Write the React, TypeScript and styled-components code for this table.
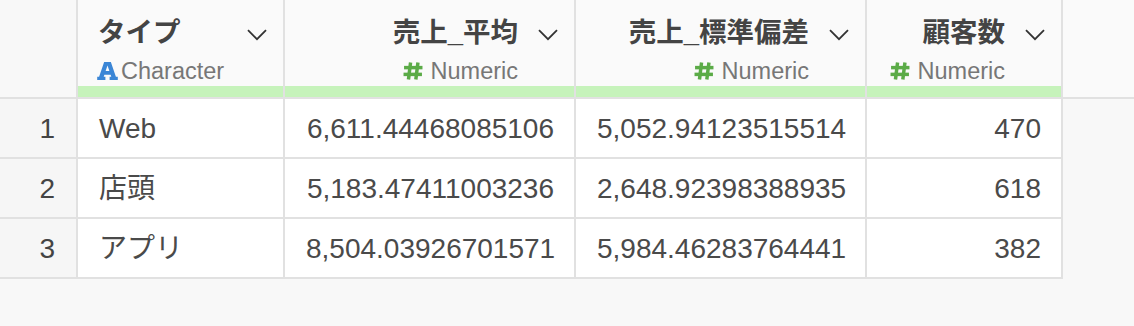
import React from "react";
import styled, { createGlobalStyle } from "styled-components";

const Global = createGlobalStyle`
  html, body { margin: 0; padding: 0; background: #f8f8f8; }
  body { font-family: "Liberation Sans", "Noto Sans CJK JP", sans-serif; color: #444; }
  * { box-sizing: border-box; }
`;

const BORDER = "#e1e1e1";

const Page = styled.div`
  width: 1134px;
  height: 326px;
  background: #f8f8f8;
  overflow: hidden;
`;

const HeaderBar = styled.div`
  display: flex;
  width: 100%;
  background: #fafafa;
  border-bottom: 2px solid ${BORDER};
`;

const CornerCell = styled.div`
  width: 78px;
  height: 97px;
  border-right: 2px solid ${BORDER};
  background: #f8f8f8;
`;

const HeadCell = styled.div<{ $w: number }>`
  width: ${(p) => p.$w}px;
  height: 97px;
  border-right: 2px solid ${BORDER};
  display: flex;
  flex-direction: column;
`;

const HeadBody = styled.div<{ $align: "left" | "right" }>`
  flex: 1;
  display: grid;
  grid-template-columns: 1fr 20px;
  grid-template-rows: 34px 28px;
  column-gap: 20px;
  row-gap: 7px;
  padding: 16px 16px 0 20px;
  text-align: ${(p) => p.$align};
`;

const Title = styled.div`
  font-size: 27.5px;
  line-height: 34px;
  font-weight: bold;
  color: #444;
  white-space: nowrap;
`;

const Chevron = styled.svg`
  width: 20px;
  height: 12px;
  margin-top: 13px;
`;

const Sub = styled.div<{ $align: "left" | "right" }>`
  display: flex;
  align-items: center;
  justify-content: ${(p) => (p.$align === "left" ? "flex-start" : "flex-end")};
  font-size: 23.5px;
  line-height: 28px;
  color: #777;
  white-space: nowrap;
`;

const TypeIcon = styled.svg<{ $gap: number; $w: number }>`
  width: ${(p) => p.$w}px;
  min-width: ${(p) => p.$w}px;
  height: 18px;
  margin-right: ${(p) => p.$gap}px;
  margin-left: -1px;
  flex: none;
  display: block;
`;

const GreenBar = styled.div`
  height: 11px;
  background: #c6f3bb;
`;

const Row = styled.div`
  display: flex;
  width: max-content;
  border-bottom: 2px solid ${BORDER};
`;

const NumCell = styled.div`
  width: 78px;
  height: 58px;
  border-right: 2px solid ${BORDER};
  background: #f6f6f6;
  font-size: 28px;
  line-height: 60px;
  text-align: right;
  padding-right: 21px;
  color: #444;
`;

const Cell = styled.div<{ $w: number; $align: "left" | "right" }>`
  width: ${(p) => p.$w}px;
  height: 58px;
  border-right: 2px solid ${BORDER};
  background: #fff;
  font-size: 28px;
  line-height: 60px;
  text-align: ${(p) => p.$align};
  padding: 0 20px 0 21px;
  color: #4a4a4a;
  white-space: nowrap;
`;

type Col = { title: string; kind: "char" | "num"; w: number };

const cols: Col[] = [
  { title: "タイプ", kind: "char", w: 207 },
  { title: "売上_平均", kind: "num", w: 291 },
  { title: "売上_標準偏差", kind: "num", w: 291 },
  { title: "顧客数", kind: "num", w: 196 },
];

const rows: string[][] = [
  ["Web", "6,611.44468085106", "5,052.94123515514", "470"],
  ["店頭", "5,183.47411003236", "2,648.92398388935", "618"],
  ["アプリ", "8,504.03926701571", "5,984.46283764441", "382"],
];

const CharIcon = () => (
  <TypeIcon $gap={3} $w={21} viewBox="0 0 20 17" preserveAspectRatio="none">
    <path
      fillRule="evenodd"
      fill="#3b86d6"
      d="M6.8 0 H13.2 L18 14 H19.8 V17 H12 V14 H13.6 L13 12 H7 L6.4 14 H8 V17 H0.2 V14 H2 Z M8.2 8.6 H11.8 L10 3.2 Z"
    />
  </TypeIcon>
);

const NumIcon = () => (
  <TypeIcon $gap={8} $w={20} viewBox="0 0 19 17" preserveAspectRatio="none">
    <g stroke="#5bab47" strokeWidth="3.3" fill="none">
      <path d="M7.2 0.5 L5.2 16.5" />
      <path d="M14.2 0.5 L12.2 16.5" />
      <path d="M1 5.3 H18.5" />
      <path d="M0.5 11.7 H18" />
    </g>
  </TypeIcon>
);

const Header = ({ col }: { col: Col }) => {
  const align = col.kind === "char" ? "left" : "right";
  return (
    <HeadCell $w={col.w}>
      <HeadBody $align={align}>
        <Title>{col.title}</Title>
        <Chevron viewBox="0 0 20 12">
          <path d="M1 1.2 L10 10.2 L19 1.2" stroke="#333" strokeWidth="1.8" fill="none" />
        </Chevron>
        <Sub $align={align}>
          {col.kind === "char" ? <CharIcon /> : <NumIcon />}
          {col.kind === "char" ? "Character" : "Numeric"}
        </Sub>
      </HeadBody>
      <GreenBar />
    </HeadCell>
  );
};

export default function App() {
  return (
    <Page>
      <Global />
      <HeaderBar>
        <CornerCell />
        {cols.map((c) => (
          <Header key={c.title} col={c} />
        ))}
      </HeaderBar>
      {rows.map((r, i) => (
        <Row key={i}>
          <NumCell>{i + 1}</NumCell>
          {r.map((v, j) => (
            <Cell key={j} $w={cols[j].w} $align={cols[j].kind === "char" ? "left" : "right"}>
              {v}
            </Cell>
          ))}
        </Row>
      ))}
    </Page>
  );
}
